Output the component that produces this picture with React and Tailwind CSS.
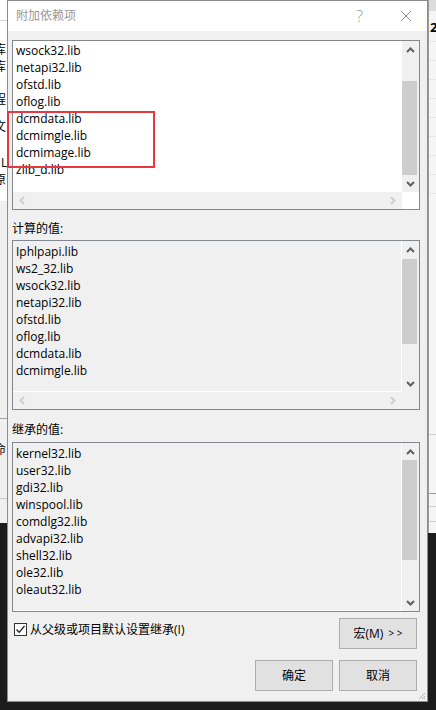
import React from 'react';

const font = "font-['Open_Sans','Noto_Sans_CJK_SC',sans-serif]";

const Up = () => (
  <svg width="9" height="6" viewBox="0 0 9 6">
    <path d="M1 5 L4.5 1.5 L8 5" fill="none" stroke="#606060" strokeWidth="2" />
  </svg>
);

const Down = () => (
  <svg width="9" height="6" viewBox="0 0 9 6">
    <path d="M1 1 L4.5 4.5 L8 1" fill="none" stroke="#606060" strokeWidth="2" />
  </svg>
);

const Left = () => (
  <svg width="6" height="9" viewBox="0 0 6 9">
    <path d="M5 1 L1.5 4.5 L5 8" fill="none" stroke="#cdcdcd" strokeWidth="2" />
  </svg>
);

const Right = () => (
  <svg width="6" height="9" viewBox="0 0 6 9">
    <path d="M1 1 L4.5 4.5 L1 8" fill="none" stroke="#cdcdcd" strokeWidth="2" />
  </svg>
);

const VScroll = ({ thumb }) => (
  <div className="w-[17px] flex flex-col bg-[#f0f0f0] shrink-0">
    <div className="h-[17px] flex items-center justify-center"><Up /></div>
    <div className="flex-1 flex flex-col">
      <div className={`w-[15px] bg-[#cdcdcd] ${thumb}`}></div>
    </div>
    <div className="h-[17px] flex items-center justify-center"><Down /></div>
  </div>
);

const HScroll = ({ corner }) => (
  <div className="h-[17px] flex shrink-0">
    <div className="flex-1 flex items-center justify-between px-[6px] bg-[#f0f0f0]">
      <Left />
      <Right />
    </div>
    <div className={`w-[17px] ${corner}`}></div>
  </div>
);

const ListBox = ({ items, disabled, hscroll, thumb, pad }) => (
  <div className="h-[170px] border border-[#828790] flex flex-col">
    <div className="flex-1 flex min-h-0">
      <div
        className={`flex-1 overflow-hidden pl-[3px] ${pad} ${
          disabled ? 'bg-[#f0f0f0] border-r border-b border-white' : 'bg-white'
        }`}
      >
        {items.map((item) => (
          <div key={item} className="h-[17px] leading-[17px] text-[12px] text-black whitespace-nowrap">
            {item}
          </div>
        ))}
      </div>
      <VScroll thumb={thumb} />
    </div>
    {hscroll && <HScroll corner={disabled ? 'bg-[#f0f0f0]' : 'bg-white'} />}
  </div>
);

const Button = ({ children }) => (
  <button className="w-[78px] h-[31px] bg-[#e1e1e1] border border-[#adadad] text-[12px] text-black flex items-center justify-center">
    {children}
  </button>
);

const additional = [
  'wsock32.lib',
  'netapi32.lib',
  'ofstd.lib',
  'oflog.lib',
  'dcmdata.lib',
  'dcmimgle.lib',
  'dcmimage.lib',
  'zlib_d.lib',
];

const computed = [
  'Iphlpapi.lib',
  'ws2_32.lib',
  'wsock32.lib',
  'netapi32.lib',
  'ofstd.lib',
  'oflog.lib',
  'dcmdata.lib',
  'dcmimgle.lib',
];

const inherited = [
  'kernel32.lib',
  'user32.lib',
  'gdi32.lib',
  'winspool.lib',
  'comdlg32.lib',
  'advapi32.lib',
  'shell32.lib',
  'ole32.lib',
  'oleaut32.lib',
];

export default function App() {
  return (
    <div className={`relative w-[436px] h-[710px] bg-[#1c1c1c] flex overflow-hidden ${font}`}>
      {/* window behind, left edge */}
      <div className="w-[7px] h-[523px] flex flex-col bg-[#f0f0f0] overflow-hidden text-[12px] text-black shrink-0">
        <div className="h-[21px] bg-white border-b border-[#d4d4d4]"></div>
        <div className="h-[180px] bg-white flex flex-col">
          <div className="h-[17px] leading-[17px] mt-[20px] -ml-[6px]">库</div>
          <div className="h-[17px] leading-[17px] -ml-[6px]">库</div>
          <div className="h-[17px] leading-[17px] mt-[16px] -ml-[6px]">程</div>
          <div className="h-[17px] leading-[17px] mt-[10px] -ml-[6px]">文</div>
          <div className="h-[17px] leading-[17px] mt-[19px] ml-[1px]">L</div>
          <div className="h-[17px] leading-[17px] -ml-[6px]">原</div>
        </div>
        <div className="h-[218px] bg-[#f0f0f0] border-b border-[#a0a0a0]"></div>
        <div className="h-[17px] leading-[17px] mt-[22px] -ml-[6px]">命</div>
        <div className="flex-1 border-t border-[#c8c8c8] mt-[40px]"></div>
      </div>

      {/* dialog */}
      <div className="w-[421px] h-[702px] bg-[#f0f0f0] border border-[#8c8c8c] flex flex-col shrink-0">
        <div className="h-[30px] bg-white flex items-center pl-[8px] shrink-0">
          <span className="text-[12px] text-[#999999]">附加依赖项</span>
          <span className="ml-auto text-[16px] text-[#999999] font-light mr-[37px]">?</span>
          <svg width="12" height="12" viewBox="0 0 12 12" className="mr-[15px]">
            <path d="M1 1 L11 11 M11 1 L1 11" stroke="#8a8a8a" strokeWidth="1" />
          </svg>
        </div>

        <div className="flex-1 flex flex-col pl-[4px] pr-[7px]">
          <div className="mt-[9px]">
            <ListBox items={additional} hscroll thumb="mt-[23px] h-[94px]" pad="pt-[1px]" />
          </div>

          <div className="mt-[10px] h-[17px] leading-[17px] text-[12px] text-black">计算的值:</div>
          <div className="mt-[3px]">
            <ListBox items={computed} disabled hscroll thumb="mt-[1px] h-[85px]" pad="pt-[2px]" />
          </div>

          <div className="mt-[11px] h-[17px] leading-[17px] text-[12px] text-black">继承的值:</div>
          <div className="mt-[4px]">
            <ListBox items={inherited} disabled thumb="mt-[0px] h-[100px]" pad="pt-[2px]" />
          </div>

          <div className="mt-[6px] flex items-start">
            <div className="flex items-center mt-[4px] ml-[2px]">
              <div className="w-[13px] h-[13px] border border-[#333333] bg-white flex items-center justify-center">
                <svg width="11" height="11" viewBox="0 0 11 11">
                  <path d="M1.5 5.5 L4.2 8.3 L9.5 2" fill="none" stroke="#202020" strokeWidth="1.3" />
                </svg>
              </div>
              <span className="ml-[3px] text-[12px] text-black leading-[15px]">从父级或项目默认设置继承(I)</span>
            </div>
            <div className="ml-auto mr-[3px]">
              <Button>
                宏(M)<span className="ml-[5px] text-[10px]">&gt; &gt;</span>
              </Button>
            </div>
          </div>

          <div className="mt-[11px] flex justify-end gap-[6px] mr-[3px]">
            <Button>确定</Button>
            <Button>取消</Button>
          </div>

          <div className="flex-1 flex items-end justify-end -mr-[6px] pb-[1px]">
            <svg width="7" height="7" viewBox="0 0 7 7">
              <path d="M6 0 L0 6 M6 3 L3 6 M6 5 L5 6" stroke="#b0b0b0" strokeWidth="1" />
            </svg>
          </div>
        </div>
      </div>

      {/* window behind, right edge */}
      <div className="w-[8px] h-[533px] flex flex-col bg-[#f5f5f5] border-l border-[#9a9a9a] overflow-hidden shrink-0">
        <div className="h-[11px] bg-[#dcdcdc]"></div>
        <div className="h-[12px] mt-[10px] ml-[1px] text-[13px] leading-[12px] font-bold text-black">2</div>
        <div className="h-[19px] mt-[8px] border-t border-[#e6e6e6]"></div>
        <div className="h-[19px] border-t border-[#e6e6e6]"></div>
        <div className="h-[19px] border-t border-[#e6e6e6]"></div>
        <div className="h-[19px] border-t border-[#e6e6e6]"></div>
        <div className="h-[19px] border-t border-[#e6e6e6]"></div>
        <div className="h-[19px] border-t border-[#e6e6e6]"></div>
        <div className="h-[19px] border-t border-[#e6e6e6]"></div>
        <div className="h-[19px] border-t border-[#e6e6e6]"></div>
        <div className="flex-1 border-t border-[#e6e6e6]"></div>
        <div className="h-[59px] border-t border-[#d0d0d0]"></div>
        <div className="h-[13px] border-t border-[#9a9a9a]"></div>
        <div className="h-[15px] border-t border-[#d0d0d0]"></div>
        <div className="h-[12px] border-t border-[#d0d0d0]"></div>
      </div>

      {/* annotation */}
      <div className="absolute left-[7px] top-[111px] w-[148px] h-[57px] border-2 border-[#e8383d]"></div>
    </div>
  );
}
